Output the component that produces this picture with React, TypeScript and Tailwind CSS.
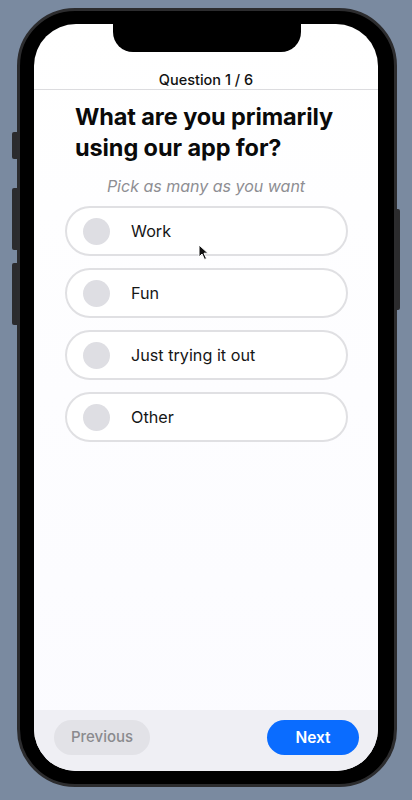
const options = ["Work", "Fun", "Just trying it out", "Other"];

function Cursor() {
  return (
    <svg className="absolute left-[164px] top-[220px] w-[11px] h-[17px]" viewBox="0 0 11 17">
      <path d="M1 1 L1 13 L4 10 L6.5 15.5 L8.5 14.5 L6 9.2 L10 9.2 Z" fill="#111" stroke="#fff" strokeWidth="1" strokeLinejoin="round" />
    </svg>
  );
}

export default function App() {
  return (
    <div className="w-[412px] h-[800px] bg-[#7a8aa0] overflow-hidden" style={{ fontFamily: "Inter, 'Noto Sans', sans-serif" }}>
      <div className="relative ml-[17px] mt-[8px] w-[380px] h-[779px]">
        {/* side buttons */}
        <div className="absolute -left-[5px] top-[124px] w-[5px] h-[27px] rounded-l-[2px] bg-[#2b2b2d]"></div>
        <div className="absolute -left-[5px] top-[180px] w-[5px] h-[62px] rounded-l-[2px] bg-[#2b2b2d]"></div>
        <div className="absolute -left-[5px] top-[255px] w-[5px] h-[62px] rounded-l-[2px] bg-[#2b2b2d]"></div>
        <div className="absolute -right-[3px] top-[201px] w-[4px] h-[101px] rounded-r-[2px] bg-[#2b2b2d]"></div>

        <div className="w-full h-full rounded-[58px] bg-black border-[3px] border-[#2c2c2e] pt-[13px] pb-[13px] pl-[14px] pr-[15px]">
          <div className="relative w-[344px] h-[747px] rounded-[42px] overflow-hidden bg-gradient-to-b from-white to-[#fbfbff] flex flex-col">
            {/* notch */}
            <div className="absolute left-[79px] top-0 w-[188px] h-[28px] bg-black rounded-b-[20px]"></div>

            <div className="h-[66px] flex items-end justify-center border-b border-[#dcdcdf]">
              <span className="text-[14.5px] leading-[18px] font-medium text-[#111]">Question 1 / 6</span>
            </div>

            <div className="px-[41px] pt-[11px]">
              <h1 className="text-[23.5px] leading-[31px] font-bold text-[#0a0a0a] tracking-[-0.1px]">
                What are you primarily using our app for?
              </h1>
            </div>

            <p className="mt-[12px] text-center italic text-[16px] leading-[22px] text-[#8e8e93]">
              Pick as many as you want
            </p>

            <div className="mt-[9px] pl-[31px] pr-[30px] flex flex-col gap-[12px]">
              {options.map((o) => (
                <div key={o} className="h-[50px] rounded-full border-2 border-[#e0e0e3] bg-white flex items-center pl-[16px]">
                  <div className="w-[27px] h-[27px] rounded-full bg-[#dedee3] shrink-0"></div>
                  <span className="ml-[21px] text-[16.2px] text-[#161616]">{o}</span>
                </div>
              ))}
            </div>

            <Cursor />

            <div className="mt-auto h-[61px] bg-[#efeff4] flex items-start justify-between pl-[20px] pr-[19px] pt-[10px]">
              <button className="w-[96px] h-[35px] rounded-full bg-[#e2e2e7] text-[15px] font-medium text-[#8a8a8e]">
                Previous
              </button>
              <button className="w-[92px] h-[35px] rounded-full bg-[#0a6cff] text-[15.5px] font-semibold text-white">
                Next
              </button>
            </div>
          </div>
        </div>
      </div>
    </div>
  );
}
